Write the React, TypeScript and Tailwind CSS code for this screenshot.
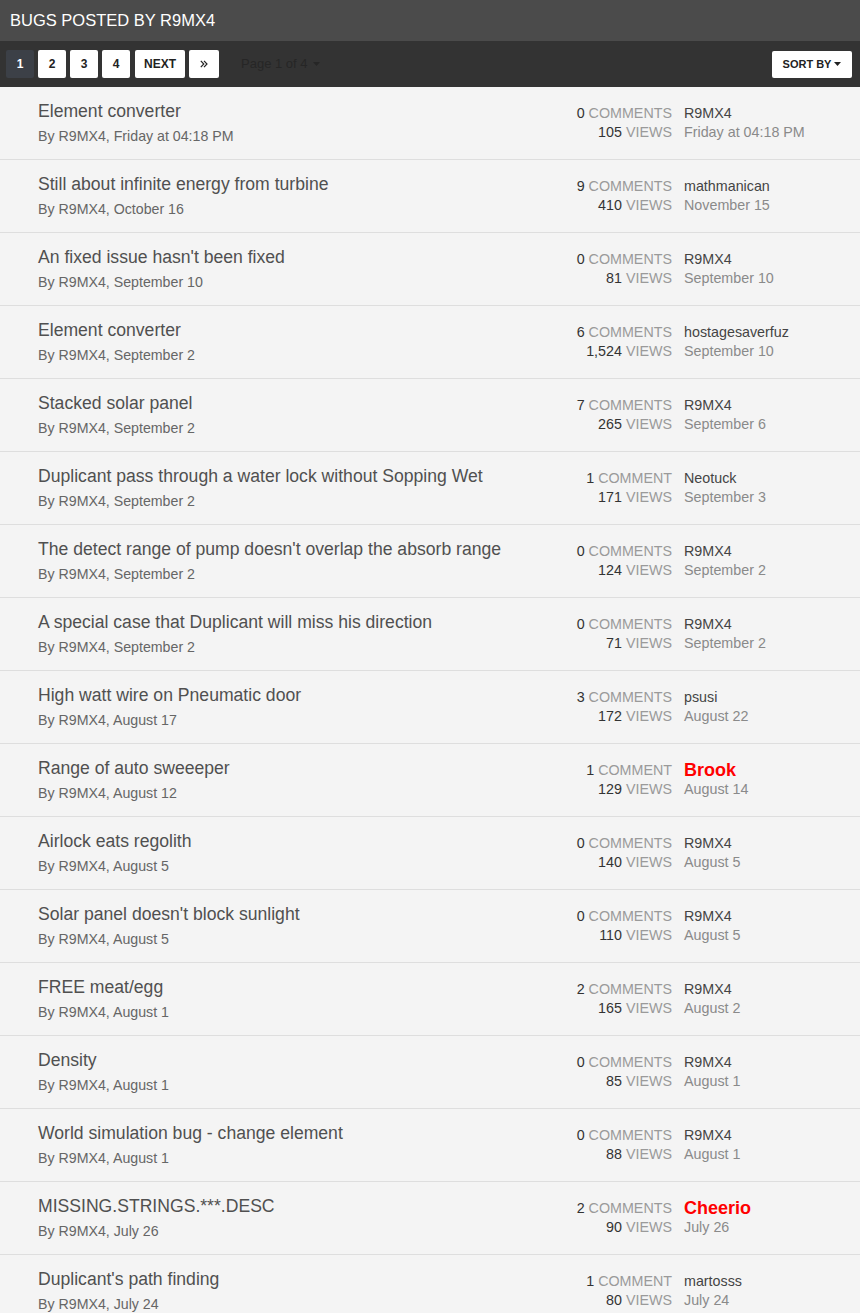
import React from "react";

type Bug = {
  title: string;
  posted: string;
  comments: number;
  views: string;
  lastBy: string;
  lastDate: string;
  staff?: boolean;
};

const bugs: Bug[] = [
  { title: "Element converter", posted: "Friday at 04:18 PM", comments: 0, views: "105", lastBy: "R9MX4", lastDate: "Friday at 04:18 PM" },
  { title: "Still about infinite energy from turbine", posted: "October 16", comments: 9, views: "410", lastBy: "mathmanican", lastDate: "November 15" },
  { title: "An fixed issue hasn't been fixed", posted: "September 10", comments: 0, views: "81", lastBy: "R9MX4", lastDate: "September 10" },
  { title: "Element converter", posted: "September 2", comments: 6, views: "1,524", lastBy: "hostagesaverfuz", lastDate: "September 10" },
  { title: "Stacked solar panel", posted: "September 2", comments: 7, views: "265", lastBy: "R9MX4", lastDate: "September 6" },
  { title: "Duplicant pass through a water lock without Sopping Wet", posted: "September 2", comments: 1, views: "171", lastBy: "Neotuck", lastDate: "September 3" },
  { title: "The detect range of pump doesn't overlap the absorb range", posted: "September 2", comments: 0, views: "124", lastBy: "R9MX4", lastDate: "September 2" },
  { title: "A special case that Duplicant will miss his direction", posted: "September 2", comments: 0, views: "71", lastBy: "R9MX4", lastDate: "September 2" },
  { title: "High watt wire on Pneumatic door", posted: "August 17", comments: 3, views: "172", lastBy: "psusi", lastDate: "August 22" },
  { title: "Range of auto sweeeper", posted: "August 12", comments: 1, views: "129", lastBy: "Brook", lastDate: "August 14", staff: true },
  { title: "Airlock eats regolith", posted: "August 5", comments: 0, views: "140", lastBy: "R9MX4", lastDate: "August 5" },
  { title: "Solar panel doesn't block sunlight", posted: "August 5", comments: 0, views: "110", lastBy: "R9MX4", lastDate: "August 5" },
  { title: "FREE meat/egg", posted: "August 1", comments: 2, views: "165", lastBy: "R9MX4", lastDate: "August 2" },
  { title: "Density", posted: "August 1", comments: 0, views: "85", lastBy: "R9MX4", lastDate: "August 1" },
  { title: "World simulation bug - change element", posted: "August 1", comments: 0, views: "88", lastBy: "R9MX4", lastDate: "August 1" },
  { title: "MISSING.STRINGS.***.DESC", posted: "July 26", comments: 2, views: "90", lastBy: "Cheerio", lastDate: "July 26", staff: true },
  { title: "Duplicant's path finding", posted: "July 24", comments: 1, views: "80", lastBy: "martosss", lastDate: "July 24" },
];

function PageButton({ label, active, wide }: { label: React.ReactNode; active?: boolean; wide?: boolean }) {
  return (
    <span
      className={
        "flex h-[28px] items-center justify-center rounded-[2px] text-[12px] font-bold " +
        (wide ? "px-[9px] " : "w-[28px] ") +
        (active ? "bg-[#3c4047] text-white" : "bg-white text-[#222]")
      }
    >
      {label}
    </span>
  );
}

function BugRow({ bug }: { bug: Bug }) {
  return (
    <li className="flex border-b border-[#dedede]">
      <div className="min-w-0 flex-1 pl-[38px] pt-[12px] pb-[13px]">
        <div className="text-[17.6px] leading-[24px] text-[#505050]">{bug.title}</div>
        <div className="mt-[3px] text-[14.2px] leading-[20px] text-[#666]">By R9MX4, {bug.posted}</div>
      </div>
      <div className="w-[140px] pt-[17px] text-right text-[14.3px] leading-[19px]">
        <div>
          <span className="text-[#333]">{bug.comments}</span>{" "}
          <span className="text-[#9a9a9a]">{bug.comments === 1 ? "COMMENT" : "COMMENTS"}</span>
        </div>
        <div>
          <span className="text-[#333]">{bug.views}</span> <span className="text-[#9a9a9a]">VIEWS</span>
        </div>
      </div>
      <div className="ml-[12px] w-[176px] pt-[17px] text-[14.3px] leading-[19px]">
        {bug.staff ? (
          <div className="text-[18px] font-bold text-[#ff0000]">{bug.lastBy}</div>
        ) : (
          <div className="text-[#444]">{bug.lastBy}</div>
        )}
        <div className="text-[#8a8a8a]">{bug.lastDate}</div>
      </div>
    </li>
  );
}

export default function App() {
  return (
    <div className="min-h-screen bg-[#f4f4f4] font-['Liberation_Sans',Arial,sans-serif]">
      <div className="flex h-[41px] items-center bg-[#4b4b4b] px-[10px] text-[16.5px] text-white">
        BUGS POSTED BY R9MX4
      </div>
      <div className="flex h-[46px] items-center justify-between bg-[#333] pl-[6px] pr-[8px]">
        <div className="flex items-center gap-[4px]">
          <PageButton label="1" active />
          <PageButton label="2" />
          <PageButton label="3" />
          <PageButton label="4" />
          <span className="ml-[1px]">
            <PageButton label="NEXT" wide />
          </span>
          <span className="flex h-[28px] w-[30px] items-center justify-center rounded-[2px] bg-white">
            <svg width="8" height="8" viewBox="0 0 8 8" fill="none" stroke="#222" strokeWidth="1.2">
              <path d="M0.8 0.8L3.8 4L0.8 7.2M4 0.8L7 4L4 7.2" />
            </svg>
          </span>
          <span className="ml-[18px] flex items-center gap-[5px] text-[13px] text-[#262626]">
            Page 1 of 4
            <svg width="7" height="4" viewBox="0 0 7 4">
              <path d="M0 0h7L3.5 4z" fill="#262626" />
            </svg>
          </span>
        </div>
        <span className="flex h-[27px] w-[80px] items-center justify-center gap-[3px] rounded-[2px] bg-white text-[11px] font-semibold text-[#222]">
          SORT BY
          <svg width="7" height="4" viewBox="0 0 7 4">
            <path d="M0 0h7L3.5 4z" fill="#222" />
          </svg>
        </span>
      </div>
      <ul>
        {bugs.map((bug, i) => (
          <BugRow key={i} bug={bug} />
        ))}
      </ul>
    </div>
  );
}
